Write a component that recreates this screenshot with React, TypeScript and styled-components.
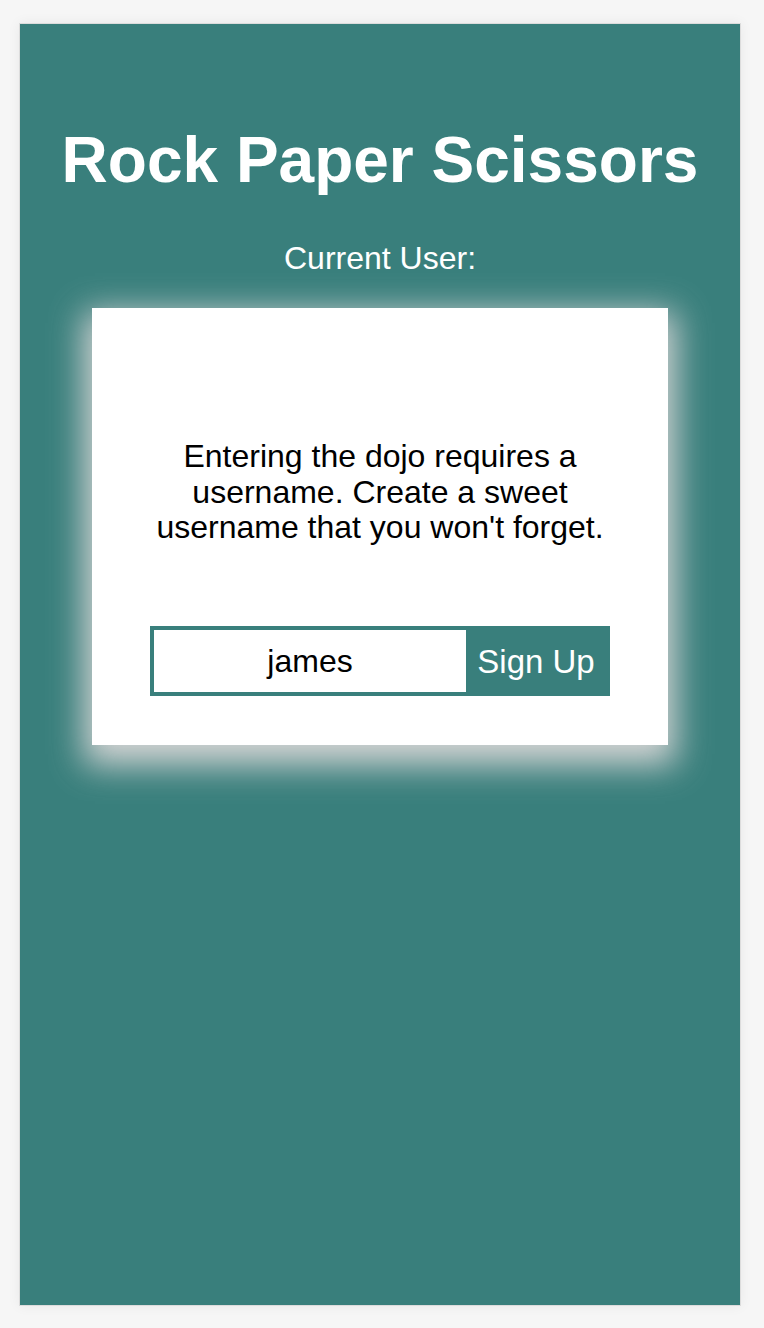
import * as React from "react";
import styled, { createGlobalStyle } from "styled-components";

const teal = "#397f7c";

const GlobalStyle = createGlobalStyle`
  html, body {
    margin: 0;
    padding: 0;
    background: #f6f6f6;
  }
  body {
    font-family: "Liberation Sans", Arial, Helvetica, sans-serif;
    font-size: 32px;
  }
`;

const Page = styled.div`
  padding: 23px 24px 23px 19px;
`;

const Panel = styled.main`
  box-sizing: border-box;
  width: 722px;
  height: 1283px;
  background: ${teal};
  border: 1px solid #dcdcdc;
  box-shadow: 0 0 12px rgba(0, 0, 0, 0.06);
  display: flex;
  flex-direction: column;
  align-items: center;
  padding-top: 99px;
  color: #fff;
`;

const Title = styled.h1`
  margin: 0;
  font-size: 64px;
  font-weight: bold;
  line-height: 74px;
`;

const CurrentUser = styled.div`
  margin-top: 43px;
  font-size: 32px;
  line-height: 37px;
`;

const Card = styled.section`
  box-sizing: border-box;
  margin-top: 31px;
  width: 576px;
  background: #fff;
  color: #000;
  padding: 131px 58px 49px;
  box-shadow: 0 12px 32px 8px #d4d4d4;
  display: flex;
  flex-direction: column;
  align-items: center;
`;

const Intro = styled.p`
  margin: 0;
  font-size: 32px;
  line-height: 35.5px;
  text-align: center;
`;

const SignUpForm = styled.form`
  box-sizing: border-box;
  margin-top: 80px;
  width: 460px;
  height: 70px;
  display: flex;
  border: 4px solid ${teal};
  background: ${teal};
`;

const NameInput = styled.input`
  box-sizing: border-box;
  width: 312px;
  height: 100%;
  border: none;
  outline: none;
  margin: 0;
  padding: 2px 0 0;
  background: #fff;
  font-family: inherit;
  font-size: 32px;
  color: #000;
  text-align: center;
`;

const SignUpButton = styled.button`
  flex: 1;
  border: none;
  margin: 0;
  padding: 2px 0 0;
  background: ${teal};
  color: #fff;
  font-family: inherit;
  font-size: 33px;
  white-space: nowrap;
  cursor: pointer;
`;

export default function App() {
  const [name, setName] = React.useState("james");
  return (
    <Page>
      <GlobalStyle />
      <Panel>
        <Title>Rock Paper Scissors</Title>
        <CurrentUser>Current User:</CurrentUser>
        <Card>
          <Intro>
            Entering the dojo requires a username. Create a sweet username that
            you won't forget.
          </Intro>
          <SignUpForm onSubmit={e => e.preventDefault()}>
            <NameInput value={name} onChange={e => setName(e.target.value)} />
            <SignUpButton type="submit">Sign Up</SignUpButton>
          </SignUpForm>
        </Card>
      </Panel>
    </Page>
  );
}
